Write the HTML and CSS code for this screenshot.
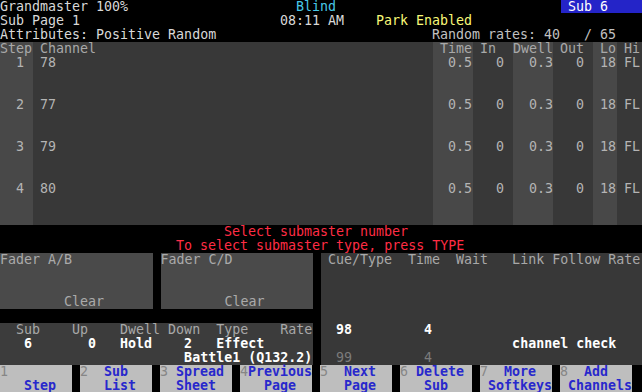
FILE: index.html
```html
<!DOCTYPE html>
<html lang="en">
<head>
    <meta charset="UTF-8">
    <title>Blind - Sub 6</title>
    <link rel="stylesheet" href="styles.css">
</head>
<body>
    <div class="screen">
        <div class="status">
            <div class="line">
                <span class="w-blind">Grandmaster 100%</span>
                <span class="w-sub blind">Blind</span>
                <span class="subbox">Sub 6</span>
            </div>
            <div class="line">
                <span class="w-clock">Sub Page 1</span>
                <span class="w-am">08:11 AM</span>
                <span class="park">Park Enabled</span>
            </div>
            <div class="line">
                <span class="w-attr">Attributes: Positive Random</span>
                <span class="dim">Random rates: 40   / 65</span>
            </div>
        </div>

        <div class="steps">
            <div class="col light nopad">
                <div class="head">Step</div>
                <div class="cell">  1</div>
                <div class="cell">  2</div>
                <div class="cell">  3</div>
                <div class="cell">  4</div>
            </div>
            <div class="col">
                <div class="head">Channel</div>
                <div class="cell">78</div>
                <div class="cell">77</div>
                <div class="cell">79</div>
                <div class="cell">80</div>
            </div>
            <div class="col light">
                <div class="head">Time</div>
                <div class="cell"> 0.5</div>
                <div class="cell"> 0.5</div>
                <div class="cell"> 0.5</div>
                <div class="cell"> 0.5</div>
            </div>
            <div class="col">
                <div class="head">In</div>
                <div class="cell">  0</div>
                <div class="cell">  0</div>
                <div class="cell">  0</div>
                <div class="cell">  0</div>
            </div>
            <div class="col light nopad">
                <div class="head">Dwell</div>
                <div class="cell">  0.3</div>
                <div class="cell">  0.3</div>
                <div class="cell">  0.3</div>
                <div class="cell">  0.3</div>
            </div>
            <div class="col">
                <div class="head">Out</div>
                <div class="cell">  0</div>
                <div class="cell">  0</div>
                <div class="cell">  0</div>
                <div class="cell">  0</div>
            </div>
            <div class="col light">
                <div class="head">Lo</div>
                <div class="cell">18</div>
                <div class="cell">18</div>
                <div class="cell">18</div>
                <div class="cell">18</div>
            </div>
            <div class="col">
                <div class="head">Hi</div>
                <div class="cell">FL</div>
                <div class="cell">FL</div>
                <div class="cell">FL</div>
                <div class="cell">FL</div>
            </div>
        </div>

        <div class="message">
            <div class="msg1">Select submaster number</div>
            <div class="msg2">To select submaster type, press TYPE</div>
        </div>

        <div class="lower">
            <div class="left">
                <div class="faders">
                    <div class="fader">
                        <div class="line">Fader A/B</div>
                        <div class="line"></div>
                        <div class="line"></div>
                        <div class="line">        Clear</div>
                    </div>
                    <div class="fader">
                        <div class="line">Fader C/D</div>
                        <div class="line"></div>
                        <div class="line"></div>
                        <div class="line">        Clear</div>
                    </div>
                </div>
                <div class="subinfo">
                    <div class="line">  Sub    Up    Dwell Down  Type    Rate</div>
                    <div class="line bright">   6       0   Hold    2   Effect</div>
                    <div class="line bright">                       Battle1 (Q132.2)</div>
                </div>
            </div>
            <div class="cues">
                <div class="line">Cue/Type  Time  Wait   Link Follow Rate</div>
                <div class="line"></div>
                <div class="line"></div>
                <div class="line"></div>
                <div class="line"></div>
                <div class="line bright"> 98         4</div>
                <div class="line bright">                       channel check</div>
                <div class="line faint"> 99         4</div>
            </div>
        </div>

        <div class="softkeys">
            <div class="key"><div class="line"><span class="num">1</span></div><div class="line">   Step</div></div>
            <div class="key"><div class="line"><span class="num">2</span>  Sub</div><div class="line">   List</div></div>
            <div class="key"><div class="line"><span class="num">3</span> Spread</div><div class="line">  Sheet</div></div>
            <div class="key"><div class="line"><span class="num">4</span>Previous</div><div class="line">   Page</div></div>
            <div class="key"><div class="line"><span class="num">5</span>  Next</div><div class="line">   Page</div></div>
            <div class="key"><div class="line"><span class="num">6</span> Delete</div><div class="line">   Sub</div></div>
            <div class="key"><div class="line"><span class="num">7</span>  More</div><div class="line"> Softkeys</div></div>
            <div class="key"><div class="line"><span class="num">8</span>  Add</div><div class="line"> Channels</div></div>
        </div>
    </div>
</body>
</html>
```

FILE: styles.css
```css
body {
    margin: 0;
    background: #000;
    font-family: "DejaVu Sans Mono", monospace;
    font-size: 13.3px;
    line-height: 14px;
    color: #d8d8d8;
}
.screen {
    width: 642px;
    height: 392px;
    overflow: hidden;
}
.line {
    display: flex;
    height: 14px;
    white-space: pre;
}

/* status lines */
.w-blind { width: 296px; }
.w-sub { width: 265px; }
.w-clock { width: 280px; }
.w-am { width: 96px; }
.w-attr { width: 432px; }
.blind { color: #48c8e8; }
.park { color: #f8f878; }
.dim { color: #c0c0c0; }
.subbox {
    flex: 1;
    background: #2424c8;
    color: #fff;
    padding-left: 7px;
    height: 13px;
}

/* step table */
.steps {
    display: grid;
    grid-template-columns: 33px 400px 40px 40px 40px 40px 24px 1fr;
    height: 183px;
    background: #383838;
    color: #b4b4b4;
}
.col {
    padding-left: 7px;
}
.col.nopad { padding-left: 0; }
.col.light { background: #484848; }
.head {
    height: 14px;
    color: #a8a8a8;
    white-space: pre;
}
.cell {
    height: 42px;
    white-space: pre;
}

/* prompt */
.message {
    height: 28px;
    color: #ff2c44;
}
.msg1 { padding-left: 224px; }
.msg2 { padding-left: 176px; }

/* lower panels */
.lower {
    display: flex;
    gap: 8px;
    height: 112px;
}
.left {
    display: flex;
    flex-direction: column;
    justify-content: space-between;
    width: 313px;
}
.faders {
    display: flex;
    gap: 8px;
}
.fader {
    flex: 1;
    height: 56px;
    background: #4a4a4a;
    color: #aaaaaa;
}
.subinfo {
    height: 42px;
    background: #3c3c3c;
    color: #a8a8a8;
}
.cues {
    flex: 1;
    background: #383838;
    color: #a8a8a8;
    padding-left: 7px;
}
.bright {
    color: #fff;
    font-weight: bold;
}
.faint { color: #7c7c7c; }

/* softkeys */
.softkeys {
    display: flex;
    gap: 8px;
    height: 28px;
}
.key {
    width: 72px;
    background: #bebebe;
    color: #2828cc;
    font-weight: bold;
}
.num {
    color: #868686;
    font-weight: normal;
}
```
